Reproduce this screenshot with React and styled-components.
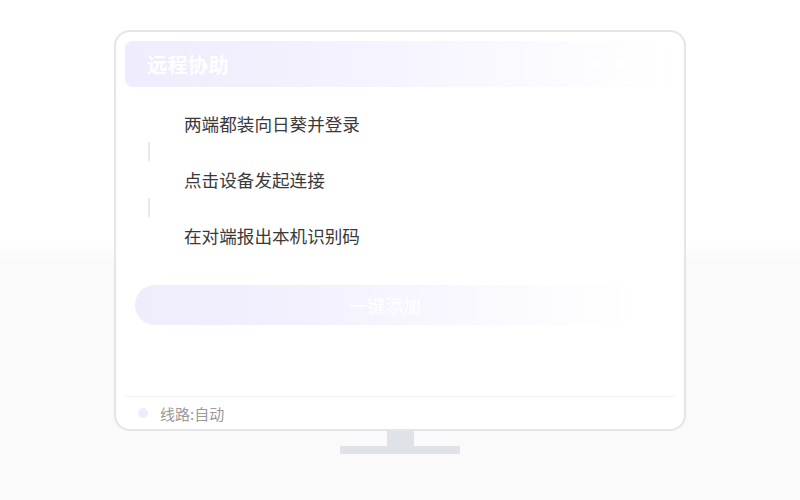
import styled, { createGlobalStyle } from 'styled-components';

const GlobalStyle = createGlobalStyle`
  html, body {
    margin: 0;
    padding: 0;
  }
  body {
    font-family: "Noto Sans CJK SC", "Noto Sans", sans-serif;
    background: linear-gradient(180deg, #ffffff 0px, #ffffff 238px, #fafafb 262px, #fafafb 100%);
    min-height: 500px;
  }
`;

const Page = styled.div`
  width: 800px;
  height: 500px;
  display: flex;
  flex-direction: column;
  align-items: center;
  padding-top: 30px;
  box-sizing: border-box;
`;

const Screen = styled.div`
  width: 572px;
  height: 401px;
  box-sizing: border-box;
  border: 2px solid #e3e5ea;
  border-radius: 16px;
  background: #fff;
  padding: 9px 9px 0;
  display: flex;
  flex-direction: column;
`;

const Header = styled.div`
  height: 46px;
  flex-shrink: 0;
  border-radius: 8px;
  background: linear-gradient(90deg, #efecfd 0%, #f4f2fe 40%, #fbfaff 75%, #ffffff 100%);
  display: flex;
  align-items: center;
  padding: 0 22px;
`;

const Title = styled.h1`
  margin: 0;
  font-size: 20px;
  font-weight: 700;
  color: #ffffff;
  letter-spacing: 0.5px;
`;

const Dots = styled.div`
  margin-left: auto;
  display: flex;
  gap: 6px;
  margin-right: 30px;
`;

const Dot = styled.span`
  width: 6px;
  height: 6px;
  border-radius: 50%;
  background: #ffffff;
`;

const Steps = styled.ol`
  list-style: none;
  margin: 25px 0 0;
  padding: 0 0 0 23px;
`;

const Step = styled.li`
  height: 24px;
  line-height: 24px;
  font-size: 17.6px;
  color: #3a3a3a;
  padding-left: 36px;
`;

const Connector = styled.li`
  height: 32px;
  box-sizing: border-box;
  padding-top: 6px;
  &::before {
    content: '';
    display: block;
    width: 2px;
    height: 19px;
    background: #e6e8ec;
  }
`;

const AddButton = styled.button`
  margin: 37px 0 0 10px;
  width: 500px;
  height: 40px;
  border: none;
  border-radius: 20px;
  background: linear-gradient(90deg, #efecfc 0%, #f3f1fe 35%, #faf9ff 70%, #ffffff 100%);
  color: #ffffff;
  font-family: "Noto Sans CJK SC", sans-serif;
  font-size: 18px;
  cursor: pointer;
`;

const Footer = styled.div`
  margin-top: auto;
  border-top: 1px solid #eef0f3;
  height: 32px;
  display: flex;
  align-items: center;
  gap: 12px;
  padding-left: 13px;
`;

const StatusDot = styled.span`
  width: 10px;
  height: 10px;
  border-radius: 50%;
  background: #eeebfc;
`;

const FooterText = styled.span`
  font-size: 15px;
  color: #9a9a9a;
`;

const Neck = styled.div`
  width: 27px;
  height: 15px;
  background: #dfe2e6;
`;

const Base = styled.div`
  width: 120px;
  height: 8px;
  background: #dfe2e6;
`;

const steps = ['两端都装向日葵并登录', '点击设备发起连接', '在对端报出本机识别码'];

export default function App() {
  return (
    <>
      <GlobalStyle />
      <Page>
        <Screen>
          <Header>
            <Title>远程协助</Title>
            <Dots>
              <Dot />
              <Dot />
              <Dot />
            </Dots>
          </Header>
          <Steps>
            {steps.flatMap((s, i) => [
              i > 0 ? <Connector key={'c' + i} /> : null,
              <Step key={s}>{s}</Step>,
            ])}
          </Steps>
          <AddButton>一键添加</AddButton>
          <Footer>
            <StatusDot />
            <FooterText>线路:自动</FooterText>
          </Footer>
        </Screen>
        <Neck />
        <Base />
      </Page>
    </>
  );
}
